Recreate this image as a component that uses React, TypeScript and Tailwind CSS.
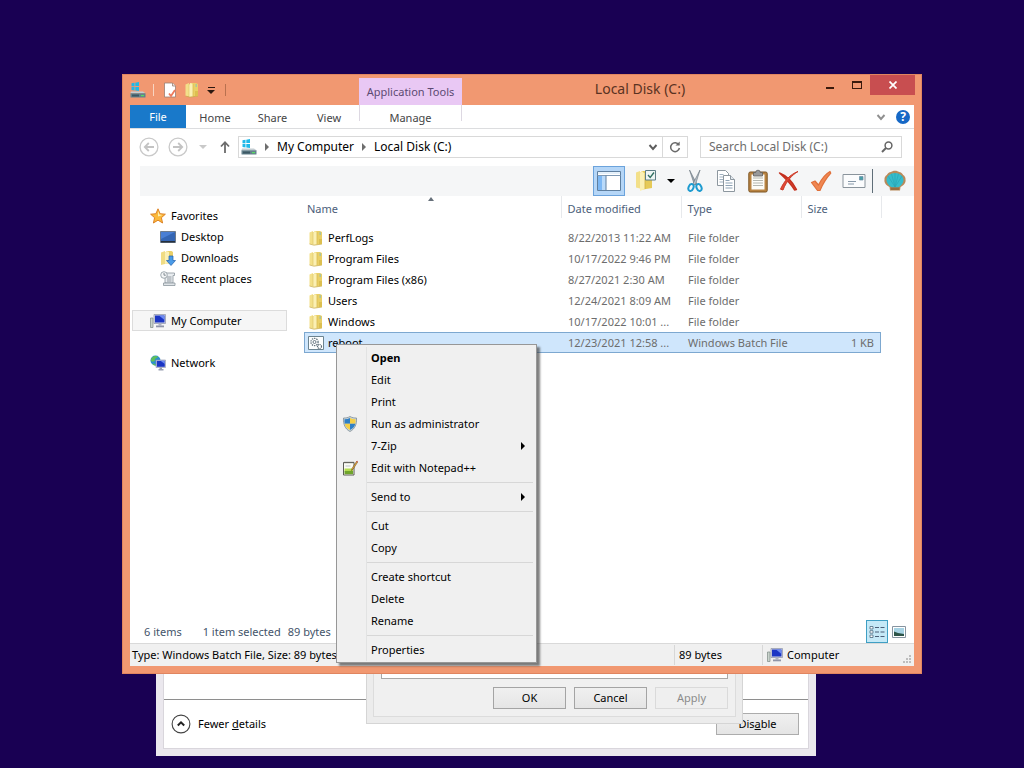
import type { ReactNode } from "react";
import clsx from "clsx";

const files = [
  { name: "PerfLogs", date: "8/22/2013 11:22 AM", type: "File folder", size: "" },
  { name: "Program Files", date: "10/17/2022 9:46 PM", type: "File folder", size: "" },
  { name: "Program Files (x86)", date: "8/27/2021 2:30 AM", type: "File folder", size: "" },
  { name: "Users", date: "12/24/2021 8:09 AM", type: "File folder", size: "" },
  { name: "Windows", date: "10/17/2022 10:01 ...", type: "File folder", size: "" },
  { name: "reboot", date: "12/23/2021 12:58 ...", type: "Windows Batch File", size: "1 KB" },
];

type MenuEntry = { label: string; bold?: boolean; icon?: ReactNode; submenu?: boolean };

const menuGroups: MenuEntry[][] = [
  [
    { label: "Open", bold: true },
    { label: "Edit" },
    { label: "Print" },
    { label: "Run as administrator", icon: <ShieldIcon /> },
    { label: "7-Zip", submenu: true },
    { label: "Edit with Notepad++", icon: <NotepadIcon /> },
  ],
  [{ label: "Send to", submenu: true }],
  [{ label: "Cut" }, { label: "Copy" }],
  [{ label: "Create shortcut" }, { label: "Delete" }, { label: "Rename" }],
  [{ label: "Properties" }],
];

/* ---------- icons ---------- */

function FolderIcon() {
  return (
    <svg viewBox="0 0 16 16" className="w-4 h-4">
      <path d="M1.500 2.500 5 1v13.500l-3.500-.5z" fill="#f3e08a" />
      <path d="M5 3l1.500-2H12l2 1v12l-8 .8z" fill="#e9cf66" />
      <path d="M6.500 1 9 2v12.500L5 15V3z" fill="#fbf0b4" />
      <path d="M9 2v12.500" stroke="#d9bb52" strokeWidth=".8" />
      <path d="M5 2v12.500" stroke="#dcc263" strokeWidth=".6" />
      <path d="M1.500 14 6 15.200l8-1.200" fill="none" stroke="#c7ab4c" strokeWidth=".7" />
      <path d="M11.500 2h1.500v3h-1.500z" fill="#a9c4a0" />
      <path d="M11 9h3v5l-3 .3z" fill="#dcbf50" />
    </svg>
  );
}

function DriveIcon() {
  return (
    <svg viewBox="0 0 16 16" className="w-4 h-4">
      <path d="M1.500 1.300 4.500.8v3.400l-3 .1zM5.300.7 9 .1v4H5.300zM1.500 5h3v3.400l-3-.4zM5.300 5H9v4.100l-3.700-.6z" fill="#1fb8e8" />
      <path d="M1 9.500h12l2.500 1.800H.5z" fill="#c3cdd2" />
      <path d="M.5 11.200h15V15a.6.6 0 0 1-.6.600H1.100A.6.6 0 0 1 .5 15z" fill="#64818c" />
      <path d="M2 12.500h7v2H2z" fill="#3d5864" />
      <path d="M11 13h3v1.200h-3z" fill="#55dd60" />
    </svg>
  );
}

function PageCheckIcon() {
  return (
    <svg viewBox="0 0 16 16" className="w-4 h-4">
      <path d="M2.500 1h8l3 3v11h-11z" fill="#fff" stroke="#9a7f72" strokeWidth=".8" />
      <path d="M10.500 1v3h3" fill="#e6e6e6" stroke="#9a7f72" strokeWidth=".8" />
      <path d="M7 11.500 9 14l4-6" fill="none" stroke="#ee7a5c" strokeWidth="1.800" />
    </svg>
  );
}

function StarIcon() {
  return (
    <svg viewBox="0 0 16 16" className="w-4 h-4">
      <path
        d="M8 .8l2.100 4.900 5.300.5-4 3.500 1.200 5.300L8 12.200 3.400 15l1.200-5.300-4-3.500 5.300-.5z"
        fill="#fbb93b"
        stroke="#d97b1c"
        strokeWidth=".9"
      />
      <path d="M8 3l1.300 3.500 3.200.4L8 8.500z" fill="#fff0b0" />
    </svg>
  );
}

function DesktopIcon() {
  return (
    <svg viewBox="0 0 16 16" className="w-4 h-4">
      <path d="M.5 2.500h15v11H.5z" fill="#3566b4" stroke="#6f7c8c" />
      <path d="M1 3h14L1 10z" fill="#4a7fd4" />
      <path d="M1 12h14v1.500H1z" fill="#26303c" />
    </svg>
  );
}

function DownloadsIcon() {
  return (
    <svg viewBox="0 0 16 16" className="w-4 h-4">
      <path d="M1 2.500 5 1v13l-4 1z" fill="#f0dc84" />
      <path d="M5 3l1.500-2h5l1.500 1v11l-8 1z" fill="#e9cf68" />
      <path d="M6.500 1 9 2v11.500L5 14V3z" fill="#fbf0b4" />
      <path d="M9 6h4v4.500h2.500L11 15.500 6.500 10.500H9z" fill="#4a9be8" stroke="#1f5fae" strokeWidth=".7" />
    </svg>
  );
}

function RecentIcon() {
  return (
    <svg viewBox="0 0 16 16" className="w-4 h-4">
      <path d="M5 2h9.500v2.500H13V12H5z" fill="#e9edf0" stroke="#8b959d" strokeWidth=".8" />
      <path d="M3.500 12H15v2.500H3.500z" fill="#dfe4e8" stroke="#8b959d" strokeWidth=".8" />
      <path d="M7 6h4.500M7 8h4.500M7 10h4.500" stroke="#7c868e" strokeWidth=".8" />
      <circle cx="4" cy="4" r="3.300" fill="#f4f6f7" stroke="#8b959d" strokeWidth=".8" />
      <path d="M4 2v2.200h1.800" fill="none" stroke="#66717a" strokeWidth=".8" />
    </svg>
  );
}

function ComputerIcon() {
  return (
    <svg viewBox="0 0 16 16" className="w-4 h-4">
      <path d="M.5 5h2.500v9.500H.5z" fill="#c9d3cc" stroke="#7c8a84" strokeWidth=".7" />
      <path d="M4 1.500h11.500v9H4z" fill="#d5d9e6" stroke="#8c92a8" strokeWidth=".7" />
      <path d="M5 2.500h9.500v7H5z" fill="#1b35c4" />
      <path d="M9 2.500h5.500V7z" fill="#6e8bf0" />
      <path d="M8.500 10.500h3v2h-3z" fill="#aeb3c2" />
      <path d="M6 12.500h8v1.800H6z" fill="#8f95a8" />
    </svg>
  );
}

function NetworkIcon() {
  return (
    <svg viewBox="0 0 16 16" className="w-4 h-4">
      <circle cx="5.500" cy="5.500" r="5" fill="#2a8fd0" />
      <path d="M2 2.500C4 .5 7 .8 8 1.500 8 3 5 3 5 5S2 7 1 6c-.3-1 .2-2.500 1-3.500z" fill="#5fbf5c" />
      <path d="M2.500 9c1-1 3 0 4 1.500-1.500.4-3-.2-4-1.500z" fill="#5fbf5c" />
      <path d="M6 5h9.500v7.500H6z" fill="#d5d9e6" stroke="#8c92a8" strokeWidth=".6" />
      <path d="M6.800 5.800h8v6h-8z" fill="#1b35c4" />
      <path d="M10.500 5.800h4.300V9z" fill="#6e8bf0" />
      <path d="M9.500 12.500h2.500v1.500h1.500v1.500h-5V14h1z" fill="#9aa0b2" />
    </svg>
  );
}

function BatchIcon() {
  return (
    <svg viewBox="0 0 16 16" className="w-4 h-4">
      <path d="M.5 1.500h15v13H.5z" fill="#fdfefe" stroke="#6b8390" />
      <circle cx="6.500" cy="7" r="3.600" fill="none" stroke="#5b6b76" strokeWidth="1.200" strokeDasharray="1.400 .9" />
      <circle cx="6.500" cy="7" r="1.500" fill="none" stroke="#5b6b76" strokeWidth=".9" />
      <circle cx="11.500" cy="11.500" r="2" fill="#fff" stroke="#5b6b76" strokeWidth="1.200" strokeDasharray="1.100 .6" />
    </svg>
  );
}

function ShieldIcon() {
  return (
    <svg viewBox="0 0 16 16" className="w-4 h-4">
      <path d="M8 .5c2 1.200 4.300 1.600 6.500 1.500.4 6-1.500 11-6.500 13.500C3 13 1.100 8 1.500 2 3.700 2.100 6 1.700 8 .5z" fill="#c9d6dc" stroke="#7d8c94" strokeWidth=".8" />
      <path d="M8 2v5.800H2.700C2.500 6.300 2.400 4.800 2.500 3.200 4.500 3.200 6.400 2.800 8 2z" fill="#2f7fc6" />
      <path d="M8 2v5.800h5.300c.2-1.500.3-3 .2-4.600C11.500 3.200 9.600 2.800 8 2z" fill="#f6cf46" />
      <path d="M8 14V7.800H2.700C3.400 10.600 5 12.800 8 14z" fill="#f6cf46" />
      <path d="M8 14V7.800h5.300C12.600 10.600 11 12.800 8 14z" fill="#2f7fc6" />
    </svg>
  );
}

function NotepadIcon() {
  return (
    <svg viewBox="0 0 16 16" className="w-4 h-4">
      <path d="M1.500 2.500H12V15H1.500z" fill="#fbfbf4" stroke="#4b4b44" strokeWidth=".9" />
      <path d="M2.500 8.500h8.500v3H2.500z" fill="#b4dc50" />
      <path d="M2.500 11h8.500v3.200H2.500z" fill="#6fa52c" />
      <path d="M3 1.500v2M5 1.500v2M7 1.500v2M9 1.500v2M11 1.500v2" stroke="#77776f" strokeWidth=".7" />
      <path d="M3.500 6h5" stroke="#a9b4b8" strokeWidth=".8" />
      <path d="M14.500 1.500 10 8.500l-.6 2 1.600-1.200L15.500 2.300z" fill="#efb13c" stroke="#5c3c14" strokeWidth=".5" />
      <path d="m14.300 1.700 1 .7.500-1.200-.7-.5z" fill="#c23a2c" />
    </svg>
  );
}

function LayoutIcon() {
  return (
    <svg viewBox="0 0 24 22" className="w-6 h-[22px]">
      <path d="M.5 1.500h23v19H.5z" fill="#fff" stroke="#5f7f9f" />
      <path d="M1 2h22v2H1z" fill="#e4f0fa" />
      <path d="M.5 5.500h23" stroke="#7f9ab5" />
      <path d="M1 6h7.500v14H1z" fill="#7db8f4" />
      <path d="M5 6h3.500v14H5z" fill="#b9dafa" />
      <path d="M9 5.500v15" stroke="#5f7f9f" />
    </svg>
  );
}

function FolderCheckIcon() {
  return (
    <svg viewBox="0 0 22 24" className="w-[22px] h-6">
      <path d="M1 3.500 5 2v17.500l-4-1z" fill="#f3e08a" />
      <path d="M5 4l2-2h6l4 3v14l-12 2z" fill="#e6ca58" />
      <path d="M7 2 10 5v15l-5 2V4z" fill="#fbf0b4" />
      <path d="M10 5v15" stroke="#cfae40" strokeWidth=".8" />
      <path d="M10.500 1.500h10v9.500h-10z" fill="#eef5f4" stroke="#5d7d86" />
      <path d="m13 6 2.200 2.500L19 3.500" fill="none" stroke="#2f6e5f" strokeWidth="1.300" />
    </svg>
  );
}

function ScissorsIcon() {
  return (
    <svg viewBox="0 0 16 24" className="w-4 h-6">
      <path d="M2.500 1 9.800 15l-2.300 1z" fill="#9aa6b0" stroke="#66727c" strokeWidth=".6" />
      <path d="M13 1 5.800 15l2.500 1z" fill="#b9c3cb" stroke="#66727c" strokeWidth=".6" />
      <ellipse cx="4" cy="18.500" rx="2.400" ry="3.600" transform="rotate(22 4 18.500)" fill="none" stroke="#1e9bd0" strokeWidth="2" />
      <ellipse cx="12" cy="18.500" rx="2.400" ry="3.600" transform="rotate(-22 12 18.500)" fill="none" stroke="#1e9bd0" strokeWidth="2" />
    </svg>
  );
}

function CopyIcon() {
  return (
    <svg viewBox="0 0 20 24" className="w-5 h-6">
      <path d="M1.500 1.500h8l3 3v12h-11z" fill="#fff" stroke="#8d979f" />
      <path d="M3.500 5.500h4M3.500 8h5M3.500 10.500h5M3.500 13h5" stroke="#9fb0c0" />
      <path d="M7.500 6.500h7l4 4v12h-11z" fill="#fff" stroke="#8d979f" />
      <path d="M14.500 6.500v4h4" fill="#e3eaf0" stroke="#8d979f" />
      <path d="M9.500 11.500h4M9.500 14h7M9.500 16.500h7M9.500 19h7" stroke="#8fa3b5" />
    </svg>
  );
}

function ClipboardIcon() {
  return (
    <svg viewBox="0 0 20 24" className="w-5 h-6">
      <rect x=".8" y="3" width="18.400" height="20" rx="1.500" fill="#b98442" stroke="#7c5423" />
      <path d="M3.500 5.500h13v15h-13z" fill="#fdfdf8" />
      <path d="M5 9h10M5 11.500h10M5 14h10M5 16.500h10" stroke="#b4b7b0" />
      <path d="M5.500 3.500h2.200a2.300 2.300 0 0 1 4.600 0h2.200v3.500h-9z" fill="#98999a" stroke="#5f5f60" strokeWidth=".8" />
    </svg>
  );
}

function DeleteIcon() {
  return (
    <svg viewBox="0 0 22 22" className="w-[22px] h-[22px]">
      <path d="M1.500 3C8 5.500 14 11 18.500 19.500l-2 .5C12.500 13 7 8 1.500 3z" fill="#d6402f" stroke="#c4301f" strokeWidth="1.400" strokeLinejoin="round" />
      <path d="M20 1.500C14 5 8.500 11 5 20l-2.500-.8C6 11 12 4.500 20 1.500z" fill="#e04a38" stroke="#cc3825" strokeLinejoin="round" />
    </svg>
  );
}

function CheckIcon() {
  return (
    <svg viewBox="0 0 22 22" className="w-[22px] h-[22px]">
      <path d="M1.500 12.500 5 11l3.500 4C11.500 9 15.500 4 20 1.500l.8 1.700C16.500 8 13 13.500 10 20.500H7.500z" fill="#f08752" stroke="#e0703a" strokeWidth="1.200" strokeLinejoin="round" />
    </svg>
  );
}

function MailIcon() {
  return (
    <svg viewBox="0 0 24 16" className="w-6 h-4">
      <path d="M1 1.500h22v13H1z" fill="#fbfcfd" stroke="#8a949c" />
      <path d="M17.500 3.500h3.500V7h-3.500z" fill="#49a0a8" stroke="#6e8da5" strokeWidth=".7" />
      <path d="M6 8.500h8M6 11h6" stroke="#8798a8" />
    </svg>
  );
}

function ShellIcon() {
  return (
    <svg viewBox="0 0 24 22" className="w-6 h-[22px]">
      <path d="M12 .8c2 0 3 .6 4 1.200 2 .2 3.500 1.500 4.200 3 1.500 1 2.500 2.500 2.300 4.500.6 3-1.500 6-5 7.500l-.5 3.500H7L6.500 17c-3.500-1.500-5.600-4.500-5-7.500C1.300 7.500 2.300 6 3.800 5 4.500 3.500 6 2.200 8 2c1-.6 2-1.200 4-1.200z" fill="#b98a5a" />
      <path d="M12 3c4.500 0 8.500 3 8.500 7 0 3-3 6.500-5.500 7.500H9C6.500 16.500 3.500 13 3.500 10c0-4 4-7 8.500-7z" fill="#35bccb" />
      <path d="M12 17 5 6M12 17 8.500 3.800M12 17V3M12 17l3.500-13.200M12 17l7-11" stroke="#2aa6b6" strokeWidth=".7" />
      <path d="M7.500 17.500h9l-.5 2.500H8z" fill="#9a6e40" />
    </svg>
  );
}

function NavArrow({ flip }: { flip?: boolean }) {
  return (
    <svg viewBox="0 0 20 20" className={clsx("w-5 h-5", flip && "-scale-x-100")}>
      <circle cx="10" cy="10" r="8.900" fill="none" stroke="#c9c9c9" strokeWidth="1.300" />
      <path d="M15 10H6M9.800 6 5.800 10l4 4" fill="none" stroke="#c3c3c3" strokeWidth="1.800" />
    </svg>
  );
}

function Chevron() {
  return (
    <svg viewBox="0 0 10 10" className="w-[10px] h-[10px]">
      <path d="M1.500 3 5 7l3.500-4" fill="none" stroke="currentColor" strokeWidth="1.900" />
    </svg>
  );
}

function RightTriangle({ className }: { className?: string }) {
  return (
    <svg viewBox="0 0 4 8" className={clsx("w-1 h-2 shrink-0", className)}>
      <path d="M0 0l4 4-4 4z" fill="currentColor" />
    </svg>
  );
}

function DownTriangle() {
  return (
    <svg viewBox="0 0 8 4" className="w-2 h-1 shrink-0">
      <path d="M0 0h8L4 4z" fill="currentColor" />
    </svg>
  );
}

/* ---------- background windows ---------- */

function TaskManager() {
  return (
    <section className="absolute left-[156px] right-[208px] top-[400px] h-[356px] bg-[#ebe8ee] p-[7px] pt-0">
      <div className="flex h-full flex-col justify-end border border-[#d9d6dc] bg-white">
        <footer className="flex h-[49px] items-center justify-between border-t border-[#8e8e8e] pr-[9px] pl-[7px]">
          <button className="flex items-center gap-[7px]">
            <svg viewBox="0 0 20 20" className="w-5 h-5">
              <circle cx="10" cy="10" r="8.900" fill="#fff" stroke="#444" strokeWidth="1.100" />
              <path d="m6.800 11.500 3.200-3.200 3.200 3.200" fill="none" stroke="#222" strokeWidth="2" />
            </svg>
            <span>
              Fewer <u>d</u>etails
            </span>
          </button>
          <button className="h-[22px] w-[83px] border border-[#acacac] bg-linear-to-b from-[#f0f0f0] to-[#e5e5e5]">
            Dis<u>a</u>ble
          </button>
        </footer>
      </div>
    </section>
  );
}

function PropertiesDialog() {
  return (
    <section className="absolute left-[366px] top-[400px] h-[324px] w-[377px] border border-[#d5d5d5] bg-[#ececec] p-[6px] pt-0">
      <div className="flex h-full flex-col border border-[#dcdcdc] bg-[#f0f0f0] px-[7px] pb-[7px]">
        <div className="flex-1 border border-[#a8a8a8] bg-white" />
        <div className="mt-2 flex justify-end gap-2">
          <button className="h-[22px] w-[73px] border border-[#a4a4a4] bg-linear-to-b from-[#f0f0f0] to-[#e5e5e5]">OK</button>
          <button className="h-[22px] w-[73px] border border-[#a4a4a4] bg-linear-to-b from-[#f0f0f0] to-[#e5e5e5]">Cancel</button>
          <button disabled className="h-[22px] w-[73px] border border-[#dadada] bg-[#efefef] text-[#8b8b8b]">
            Apply
          </button>
        </div>
      </div>
    </section>
  );
}

/* ---------- explorer ---------- */

function TitleBar() {
  return (
    <header className="relative flex h-[30px] items-start justify-between">
      <div className="flex h-[30px] items-center">
        <DriveIcon />
        <span className="ml-[7px] h-3 w-px bg-[#f8d5c2]" />
        <button aria-label="Properties" className="ml-2">
          <PageCheckIcon />
        </button>
        <button aria-label="New folder" className="ml-[6px]">
          <FolderIcon />
        </button>
        <button aria-label="Customize toolbar" className="ml-[7px] flex flex-col items-center gap-[2px] text-[#2c1810]">
          <span className="h-px w-[7px] bg-[#2c1810]" />
          <DownTriangle />
        </button>
        <span className="ml-[10px] h-3 w-px bg-[#b9714f]" />
      </div>
      <h1 className="absolute inset-x-0 top-[2px] pl-[236px] text-center text-[14px] leading-6 text-[#5a3222]">Local Disk (C:)</h1>
      <div className="absolute left-[229px] top-[3px] flex h-[27px] w-[103px] items-center justify-center bg-[#e9c8f4] text-[#5c4a72]">
        Application Tools
      </div>
      <div className="relative -mr-px flex text-[#3a1a0c]">
        <button aria-label="Minimize" className="flex h-5 w-[27px] items-center justify-center pt-[6px]">
          <span className="h-[2px] w-2 bg-current" />
        </button>
        <button aria-label="Maximize" className="flex h-5 w-[27px] items-center justify-center">
          <span className="h-2 w-[10px] border border-t-2 border-current" />
        </button>
        <button aria-label="Close" className="flex h-5 w-[45px] items-center justify-center bg-[#c84e50]">
          <svg viewBox="0 0 8 8" className="w-2 h-2">
            <path d="m.5.500 7 7M7.500.500l-7 7" stroke="#fff" strokeWidth="1.700" />
          </svg>
        </button>
      </div>
    </header>
  );
}

function RibbonTabs() {
  return (
    <nav className="flex h-6 items-start border-b border-[#dcdddf] text-[#444]">
      <button className="h-[23px] w-14 bg-[#1979ca] text-white">File</button>
      <button className="h-[25px] w-[58px]">Home</button>
      <button className="h-[25px] w-[57px]">Share</button>
      <button className="h-[25px] w-14">View</button>
      <div className="ml-[2px] h-4 w-[103px] border-x border-[#ddd8e2]">
        <button className="h-[25px] w-full">Manage</button>
      </div>
      <div className="ml-auto flex h-[23px] items-center pr-1">
        <button aria-label="Expand the ribbon" className="text-[#8f8f8f]">
          <Chevron />
        </button>
        <button
          aria-label="Help"
          className="ml-[10px] flex h-[14px] w-[14px] items-center justify-center rounded-full bg-[#1668c6] text-[12px] font-bold text-white"
        >
          ?
        </button>
      </div>
    </nav>
  );
}

function AddressRow() {
  return (
    <div className="flex h-9 items-center pl-[9px] pr-3 text-[12px]">
      <button aria-label="Back">
        <NavArrow />
      </button>
      <button aria-label="Forward" className="ml-[9px]">
        <NavArrow flip />
      </button>
      <button aria-label="Recent locations" className="ml-[11px] text-[#c9c9c9]">
        <DownTriangle />
      </button>
      <button aria-label="Up" className="ml-3">
        <svg viewBox="0 0 12 14" className="w-3 h-[14px]">
          <path d="M6 13V2.500M2 6.500l4-4.300 4 4.300" fill="none" stroke="#6c6c6c" strokeWidth="1.800" />
        </svg>
      </button>
      <div className="ml-[7px] flex h-[22px] flex-1 items-center border border-[#d9d9d9] pl-[2px] text-black">
        <DriveIcon />
        <RightTriangle className="ml-2 text-[#6e6e6e]" />
        <a href="#computer" className="ml-2">
          My Computer
        </a>
        <RightTriangle className="ml-2 text-[#6e6e6e]" />
        <a href="#c" className="ml-2">
          Local Disk (C:)
        </a>
        <button aria-label="Previous locations" className="ml-auto mr-1 text-[#5d5d5d]">
          <Chevron />
        </button>
        <button aria-label="Refresh" className="flex h-5 w-[25px] items-center justify-center border-l border-[#d9d9d9]">
          <svg viewBox="0 0 12 12" className="w-3 h-3">
            <path d="M9.800 3.900A4.400 4.400 0 1 0 10.400 7" fill="none" stroke="#6a6a6a" strokeWidth="1.500" />
            <path d="M6.500 4.500h4.200V.5z" fill="#6a6a6a" />
          </svg>
        </button>
      </div>
      <label className="ml-3 flex h-[22px] w-[202px] items-center border border-[#d9d9d9] pl-2 pr-2">
        <input
          aria-label="Search"
          placeholder="Search Local Disk (C:)"
          className="min-w-0 flex-1 outline-none placeholder:text-[#6d6d6d]"
        />
        <svg viewBox="0 0 12 12" className="w-3 h-3">
          <circle cx="7.500" cy="4.500" r="3.400" fill="none" stroke="#666" strokeWidth="1.500" />
          <path d="M5 7 1 11" stroke="#666" strokeWidth="2" />
        </svg>
      </label>
    </div>
  );
}

function Toolbar() {
  return (
    <div className="mt-px ml-[10px] flex h-[30px] shrink-0 items-center justify-end gap-[10px] bg-[#f5f6f7] pr-[7px]">
      <button aria-label="Panes" className="flex h-[30px] w-8 items-center justify-center border border-[#6ba3dc] bg-[#b5d6f7]">
        <LayoutIcon />
      </button>
      <button aria-label="Folder options" className="flex items-center gap-[10px]">
        <FolderCheckIcon />
        <DownTriangle />
      </button>
      <button aria-label="Cut" className="ml-[2px]">
        <ScissorsIcon />
      </button>
      <button aria-label="Copy" className="ml-[3px]">
        <CopyIcon />
      </button>
      <button aria-label="Paste" className="ml-[2px]">
        <ClipboardIcon />
      </button>
      <button aria-label="Delete">
        <DeleteIcon />
      </button>
      <button aria-label="Apply">
        <CheckIcon />
      </button>
      <button aria-label="Rename">
        <MailIcon />
      </button>
      <span className="-ml-1 h-6 w-px bg-[#5f6e78]" />
      <button aria-label="Shell">
        <ShellIcon />
      </button>
    </div>
  );
}

function SideItem({ icon, label, nested, selected }: { icon: ReactNode; label: string; nested?: boolean; selected?: boolean }) {
  return (
    <a
      href="#"
      className={clsx(
        "mx-[2px] flex h-[21px] items-center gap-[5px] border text-black",
        nested ? "pl-[27px]" : "pl-[17px]",
        selected ? "border-[#dcdcdc] bg-[#f6f6f6]" : "border-transparent"
      )}
    >
      {icon}
      {label}
    </a>
  );
}

function Sidebar() {
  return (
    <aside className="flex w-[159px] shrink-0 flex-col gap-[21px] pt-[9px]">
      <div>
        <SideItem icon={<StarIcon />} label="Favorites" />
        <SideItem icon={<DesktopIcon />} label="Desktop" nested />
        <SideItem icon={<DownloadsIcon />} label="Downloads" nested />
        <SideItem icon={<RecentIcon />} label="Recent places" nested />
      </div>
      <SideItem icon={<ComputerIcon />} label="My Computer" selected />
      <SideItem icon={<NetworkIcon />} label="Network" />
    </aside>
  );
}

function FileList() {
  return (
    <div className="relative ml-[15px] flex-1">
      <table className="w-[577px] table-fixed border-collapse text-left">
        <colgroup>
          <col className="w-[257px]" />
          <col className="w-[120px]" />
          <col className="w-[120px]" />
          <col className="w-20" />
        </colgroup>
        <thead>
          <tr className="h-[22px] text-[#4c607a]">
            <th className="border-r border-[#e7e9ec] pl-[3px] pt-1 font-normal">Name</th>
            <th className="border-r border-[#e7e9ec] pl-[6px] pt-1 font-normal">Date modified</th>
            <th className="border-r border-[#e7e9ec] pl-[6px] pt-1 font-normal">Type</th>
            <th className="border-r border-[#e7e9ec] pl-[6px] pt-1 font-normal">Size</th>
          </tr>
        </thead>
        <tbody className="text-[#6d6d6d] before:block before:h-[9px]">
          {files.map((file) => {
            const selected = file.name === "reboot";
            return (
              <tr key={file.name} className={clsx("h-[21px]", selected && "bg-[#cfe6fc] outline-1 -outline-offset-1 outline-[#7da8d0]")}>
                <td className="pl-1">
                  <span className="flex items-center gap-1 text-black">
                    {selected ? <BatchIcon /> : <FolderIcon />}
                    {file.name}
                  </span>
                </td>
                <td className="whitespace-nowrap pl-[7px]">{file.date}</td>
                <td className="whitespace-nowrap pl-[7px]">{file.type}</td>
                <td className="pr-[7px] text-right">{file.size}</td>
              </tr>
            );
          })}
        </tbody>
      </table>
      <svg viewBox="0 0 6 4" className="absolute left-[124px] top-[1px] w-[6px] h-1">
        <path d="M0 4 3 0l3 4z" fill="#66707a" />
      </svg>
    </div>
  );
}

function StatusBars() {
  return (
    <footer>
      <div className="flex h-[23px] items-center pl-[14px] pr-2 text-[#44546a]">
        <span>6 items</span>
        <span className="ml-[21px]">1 item selected</span>
        <span className="ml-[7px]">89 bytes</span>
        <button
          aria-label="Details view"
          className="ml-auto flex h-[23px] w-[22px] items-center justify-center border border-[#3f9fc4] bg-[#c5e9f7]"
        >
          <svg viewBox="0 0 16 14" className="w-4 h-[14px]">
            <path d="M1 1.500h3v2.500H1zM1 5.700h3v2.500H1zM1 10h3v2.500H1z" fill="#fff" stroke="#4c6b80" strokeWidth=".8" />
            <path d="M6 2.500h4M11.500 2.500h4M6 7h4M11.500 7h4M6 11.500h4M11.500 11.500h4" stroke="#4c5f78" strokeWidth="1.200" />
          </svg>
        </button>
        <button aria-label="Large icons" className="ml-1">
          <svg viewBox="0 0 14 12" className="w-[14px] h-3">
            <path d="M.5.500h13v11H.5z" fill="#fff" stroke="#8794a0" />
            <path d="M2 2h10v8H2z" fill="#a7d3e4" />
            <path d="M2 10V5.500l4 1.500 6 1v2z" fill="#2d5448" />
          </svg>
        </button>
      </div>
      <div className="flex h-[23px] items-center border-t border-[#d9d9d9] bg-[#f0f0f0] text-black">
        <span className="flex-1 pl-[2px] leading-5">Type: Windows Batch File, Size: 89 bytes</span>
        <span className="w-[88px] border-l border-[#d7d7d7] pl-1 leading-5">89 bytes</span>
        <span className="flex w-[152px] items-center gap-1 border-l border-[#d7d7d7] pl-1 leading-5">
          <ComputerIcon />
          Computer
          <svg viewBox="0 0 9 9" className="mr-[2px] mt-2 ml-auto w-[9px] h-[9px]">
            <path d="M6 0h2v2H6zM3 3h2v2H3zM6 3h2v2H6zM0 6h2v2H0zM3 6h2v2H3zM6 6h2v2H6z" fill="#bdbdbd" />
          </svg>
        </span>
      </div>
    </footer>
  );
}

function Explorer() {
  return (
    <main className="absolute left-[122px] right-[102px] top-[74px] flex h-[600px] flex-col border border-[#e08560] bg-[#f19871] px-[7px] pb-[7px]">
      <TitleBar />
      <div className="flex min-h-0 flex-1 flex-col bg-white">
        <RibbonTabs />
        <AddressRow />
        <Toolbar />
        <div className="flex min-h-0 flex-1">
          <Sidebar />
          <FileList />
        </div>
        <StatusBars />
      </div>
    </main>
  );
}

function ContextMenu() {
  return (
    <ul
      role="menu"
      className="absolute left-[336px] top-[344px] w-[201px] border border-[#979797] bg-[#f0f0f0] pt-[2px] pb-px text-black shadow-[3px_3px_2px_rgba(60,60,60,0.65)]"
    >
      {menuGroups.map((group, index) => (
        <li key={group[0].label} role="none">
          {index > 0 && (
            <div className="ml-[29px] mr-[3px] h-[7px] border-l border-[#e2e3e3] pt-[3px]">
              <hr className="border-[#d7d7d7]" />
            </div>
          )}
          {group.map((entry) => (
            <button key={entry.label} role="menuitem" className="flex h-[22px] w-full items-center text-left">
              <span className="flex h-full w-[30px] items-center justify-center border-r border-[#e2e3e3] pr-[3px]">{entry.icon}</span>
              <span className={clsx("flex-1 pl-1", entry.bold && "font-bold")}>{entry.label}</span>
              {entry.submenu && <RightTriangle className="mr-[11px]" />}
            </button>
          ))}
        </li>
      ))}
    </ul>
  );
}

export default function App() {
  return (
    <div className="relative min-h-screen overflow-hidden bg-[#190053] font-['Noto_Sans',sans-serif] text-[11px] leading-4 text-black">
      <TaskManager />
      <PropertiesDialog />
      <Explorer />
      <ContextMenu />
    </div>
  );
}
